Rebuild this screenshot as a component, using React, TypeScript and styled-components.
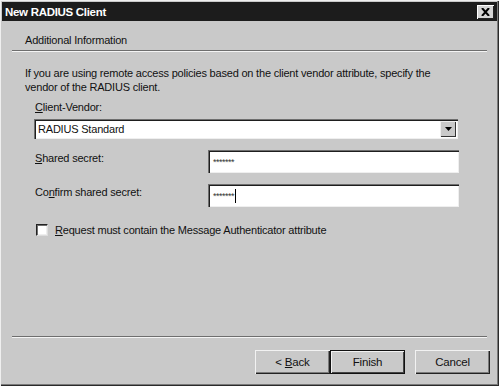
import styled, { createGlobalStyle } from "styled-components";

const GlobalStyle = createGlobalStyle`
  html, body {
    margin: 0;
    padding: 0;
    background: #c9c9c9;
  }
  * {
    box-sizing: border-box;
  }
`;

const Window = styled.div`
  width: 499px;
  height: 386px;
  display: flex;
  flex-direction: column;
  background: #c9c9c9;
  font-family: "Liberation Sans", Arial, sans-serif;
  font-size: 11px;
  letter-spacing: -0.2px;
  color: #111;
  padding: 2px;
  box-shadow: inset 1px 1px 0 #efefef, inset -1px -1px 0 #2a2a2a,
    inset -2px -2px 0 #7a7a7a;
`;

const TitleBar = styled.div`
  height: 19px;
  background: #1c1c1c;
  color: #fff;
  font-weight: bold;
  font-size: 11.5px;
  letter-spacing: -0.3px;
  display: flex;
  align-items: center;
  justify-content: space-between;
  padding: 0 3px 0 3px;
`;

const CloseButton = styled.div`
  width: 17px;
  height: 14px;
  background: #d4d4d4;
  box-shadow: inset 1px 1px 0 #fff, inset -1px -1px 0 #222;
  display: flex;
  align-items: center;
  justify-content: center;
`;

const Header = styled.div`
  height: 29px;
  display: flex;
  align-items: center;
  padding: 8px 0 0 23px;
`;

const Separator = styled.div`
  margin: 0 10px;
  border-top: 1px solid #6e6e6e;
  border-bottom: 1px solid #f4f4f4;
`;

const Body = styled.div`
  flex: 1;
  padding: 14px 0 0 23px;
  display: flex;
  flex-direction: column;
`;

const Paragraph = styled.p`
  margin: 0;
  line-height: 14px;
  width: 430px;
`;

const FieldLabel = styled.div`
  margin: 6px 0 0 10px;
  line-height: 14px;
`;

const Combo = styled.div`
  margin: 5px 0 0 9px;
  width: 424px;
  height: 20px;
  background: #fff;
  display: flex;
  align-items: center;
  justify-content: space-between;
  padding: 0 2px 0 4px;
  box-shadow: inset 1px 1px 0 #6e6e6e, inset 2px 2px 0 #1e1e1e,
    inset -1px -1px 0 #efefef;
`;

const DropButton = styled.div`
  width: 16px;
  height: 16px;
  background: #c9c9c9;
  box-shadow: inset 1px 1px 0 #eee, inset -1px -1px 0 #333;
  display: flex;
  align-items: center;
  justify-content: center;
`;

const Row = styled.div<{ $top: number }>`
  display: flex;
  align-items: flex-start;
  margin-top: ${(p) => p.$top}px;
  padding-left: 10px;
`;

const RowLabel = styled.div`
  width: 173px;
  padding-top: 1px;
  line-height: 14px;
`;

const SecretInput = styled.div`
  width: 251px;
  height: 23px;
  background: #fff;
  display: flex;
  align-items: center;
  padding-left: 5px;
  font-size: 9px;
  letter-spacing: -0.5px;
  color: #333;
  box-shadow: inset 1px 1px 0 #6e6e6e, inset 2px 2px 0 #1e1e1e,
    inset -1px -1px 0 #efefef;
`;

const Caret = styled.span`
  display: inline-block;
  width: 1px;
  height: 14px;
  background: #000;
  margin-left: 1px;
`;

const CheckRow = styled.label`
  display: flex;
  align-items: center;
  gap: 7px;
  margin: 17px 0 0 11px;
`;

const CheckBox = styled.span`
  width: 12px;
  height: 12px;
  background: #fff;
  box-shadow: inset 1px 1px 0 #6e6e6e, inset -1px -1px 0 #eee;
  border: 1px solid #222;
  border-right-color: #ddd;
  border-bottom-color: #ddd;
`;

const Footer = styled.div`
  display: flex;
  justify-content: flex-end;
  padding: 12px 7px 10px 0;
`;

const Button = styled.div<{ $primary?: boolean; $gap?: number }>`
  width: 75px;
  height: 24px;
  margin-left: ${(p) => p.$gap ?? 0}px;
  display: flex;
  align-items: center;
  justify-content: center;
  font-size: 11.5px;
  background: #c9c9c9;
  box-shadow: ${(p) =>
    p.$primary
      ? "inset 0 0 0 1px #111, inset 2px 2px 0 #f2f2f2, inset -2px -2px 0 #444"
      : "inset 1px 1px 0 #f2f2f2, inset -1px -1px 0 #222, inset -2px -2px 0 #7a7a7a"};
`;

const U = styled.span`
  text-decoration: underline;
`;

export default function App() {
  return (
    <>
      <GlobalStyle />
      <Window>
        <TitleBar>
          <span>New RADIUS Client</span>
          <CloseButton>
            <svg width="9" height="8" viewBox="0 0 9 8">
              <path d="M1 0 L8 8 M8 0 L1 8" stroke="#000" strokeWidth="2" />
            </svg>
          </CloseButton>
        </TitleBar>
        <Header>Additional Information</Header>
        <Separator />
        <Body>
          <Paragraph>
            If you are using remote access policies based on the client vendor
            attribute, specify the vendor of the RADIUS client.
          </Paragraph>
          <FieldLabel>
            <U>C</U>lient-Vendor:
          </FieldLabel>
          <Combo>
            <span>RADIUS Standard</span>
            <DropButton>
              <svg width="7" height="4" viewBox="0 0 7 4">
                <path d="M0 0 H7 L3.5 4 Z" fill="#000" />
              </svg>
            </DropButton>
          </Combo>
          <Row $top={11}>
            <RowLabel>
              <U>S</U>hared secret:
            </RowLabel>
            <SecretInput>*******</SecretInput>
          </Row>
          <Row $top={11}>
            <RowLabel>
              Co<U>n</U>firm shared secret:
            </RowLabel>
            <SecretInput>
              *******
              <Caret />
            </SecretInput>
          </Row>
          <CheckRow>
            <CheckBox />
            <span>
              <U>R</U>equest must contain the Message Authenticator attribute
            </span>
          </CheckRow>
        </Body>
        <Separator />
        <Footer>
          <Button>
            &lt;&nbsp;<U>B</U>ack
          </Button>
          <Button $primary>Finish</Button>
          <Button $gap={10}>Cancel</Button>
        </Footer>
      </Window>
    </>
  );
}
